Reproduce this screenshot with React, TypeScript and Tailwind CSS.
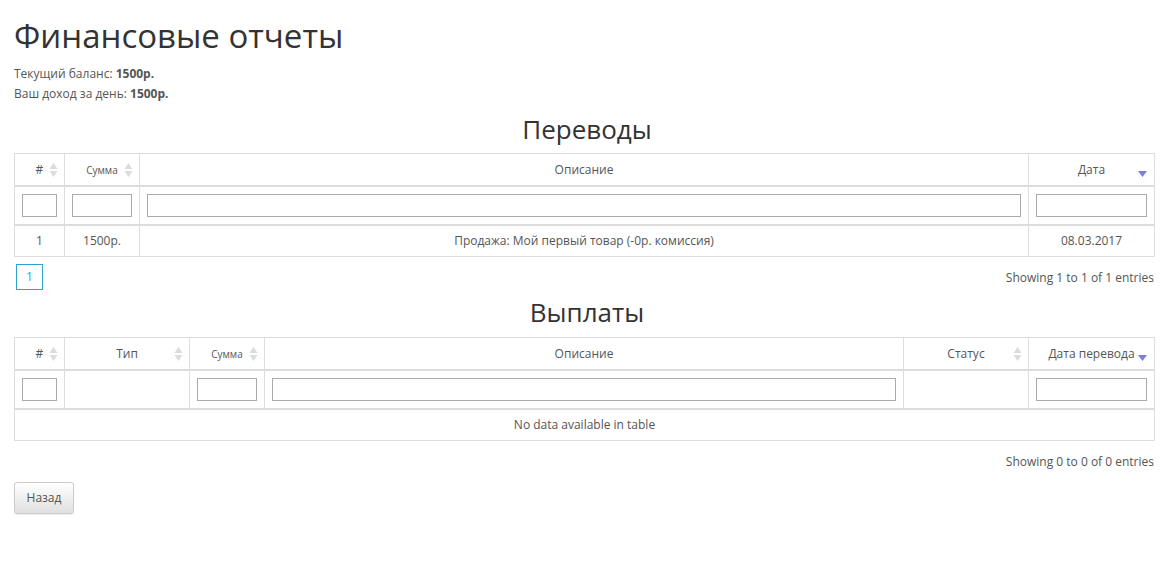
import React from 'react';

type Col = { label: string; width: number; small?: boolean; sort?: 'both' | 'desc'; filter?: boolean };

const transferCols: Col[] = [
  { label: '#', width: 50, sort: 'both', filter: true },
  { label: 'Сумма', width: 75, small: true, sort: 'both', filter: true },
  { label: 'Описание', width: 889, filter: true },
  { label: 'Дата', width: 126, sort: 'desc', filter: true },
];

const payoutCols: Col[] = [
  { label: '#', width: 50, sort: 'both', filter: true },
  { label: 'Тип', width: 125, sort: 'both' },
  { label: 'Сумма', width: 75, small: true, sort: 'both', filter: true },
  { label: 'Описание', width: 639, filter: true },
  { label: 'Статус', width: 125, sort: 'both' },
  { label: 'Дата перевода', width: 126, sort: 'desc', filter: true },
];

function SortIcon({ kind }: { kind: 'both' | 'desc' }) {
  if (kind === 'desc') {
    return (
      <svg width="9" height="6" viewBox="0 0 9 6" className="absolute right-[7px] top-[17px]">
        <path d="M0 0 L9 0 L4.5 6 Z" fill="#7b7fdc" />
      </svg>
    );
  }
  return (
    <svg width="9" height="16" viewBox="0 0 9 16" className="absolute right-[6px] top-[8px]">
      <path d="M4.5 1 L8.5 7 L0.5 7 Z" fill="#dcdcdc" />
      <path d="M0.5 9 L8.5 9 L4.5 15 Z" fill="#dcdcdc" />
    </svg>
  );
}

function DataTable({ cols, children }: { cols: Col[]; children: React.ReactNode }) {
  return (
    <table className="w-[1140px] table-fixed border-collapse border border-[#dddddd]">
      <colgroup>
        {cols.map((c, i) => (
          <col key={i} style={{ width: c.width }} />
        ))}
      </colgroup>
      <thead>
        <tr className="h-[32px]">
          {cols.map((c, i) => (
            <th
              key={i}
              className={`relative border border-b-2 border-[#dddddd] px-[18px] pt-[2px] text-center font-normal text-[#555555] ${
                c.small ? 'text-[10px]' : 'text-[12px]'
              }`}
            >
              {c.label}
              {c.sort && <SortIcon kind={c.sort} />}
            </th>
          ))}
        </tr>
        <tr className="h-[39px]">
          {cols.map((c, i) => (
            <th key={i} className="border border-b-2 border-[#dddddd] px-[7px] font-normal">
              {c.filter && (
                <input
                  type="text"
                  className="block h-[23px] w-full border border-[#aaaaaa] bg-white px-1 text-[12px] outline-none"
                />
              )}
            </th>
          ))}
        </tr>
      </thead>
      <tbody>{children}</tbody>
    </table>
  );
}

export default function App() {
  return (
    <div className="min-h-[569px] bg-white px-[14px] font-['Open_Sans',sans-serif] text-[12px] text-[#555555]">
      <h1 className="pt-[15px] text-[33px] leading-[42px] text-[#333333]">Финансовые отчеты</h1>
      <div className="mt-[7px] leading-[20px]">
        <p>
          Текущий баланс: <b>1500р.</b>
        </p>
        <p>
          Ваш доход за день: <b>1500р.</b>
        </p>
      </div>

      {/* Переводы */}
      <h2 className="mt-[9px] text-center text-[26px] leading-[33px] text-[#333333]">Переводы</h2>
      <div className="mt-[7px]">
        <DataTable cols={transferCols}>
          <tr className="h-[32px] text-center">
            <td className="border border-[#dddddd] pt-[1px]">1</td>
            <td className="border border-[#dddddd] pt-[1px]">1500р.</td>
            <td className="border border-[#dddddd] pt-[1px]">Продажа: Мой первый товар (-0р. комиссия)</td>
            <td className="border border-[#dddddd] pt-[1px]">08.03.2017</td>
          </tr>
        </DataTable>
      </div>
      <div className="flex w-[1140px] items-center justify-between pt-[7px]">
        <button className="ml-[2px] flex h-[26px] w-[27px] items-center justify-center border border-[#2ea3cf] text-[12px] text-[#2ea3cf]">
          1
        </button>
        <span className="pt-[1px]">Showing 1 to 1 of 1 entries</span>
      </div>

      {/* Выплаты */}
      <h2 className="mt-[6px] text-center text-[26px] leading-[33px] text-[#333333]">Выплаты</h2>
      <div className="mt-[8px]">
        <DataTable cols={payoutCols}>
          <tr className="h-[32px] text-center">
            <td colSpan={6} className="border border-[#dddddd] pt-[1px]">
              No data available in table
            </td>
          </tr>
        </DataTable>
      </div>
      <div className="flex w-[1140px] justify-end pt-[12px]">
        <span>Showing 0 to 0 of 0 entries</span>
      </div>

      <button className="mt-[11px] h-[32px] w-[60px] rounded-[3px] border border-[#cccccc] bg-gradient-to-b from-[#ffffff] to-[#e0e0e0] text-[12px] text-[#555555] shadow-[0_1px_1px_rgba(0,0,0,0.08)]">
        Назад
      </button>
    </div>
  );
}
